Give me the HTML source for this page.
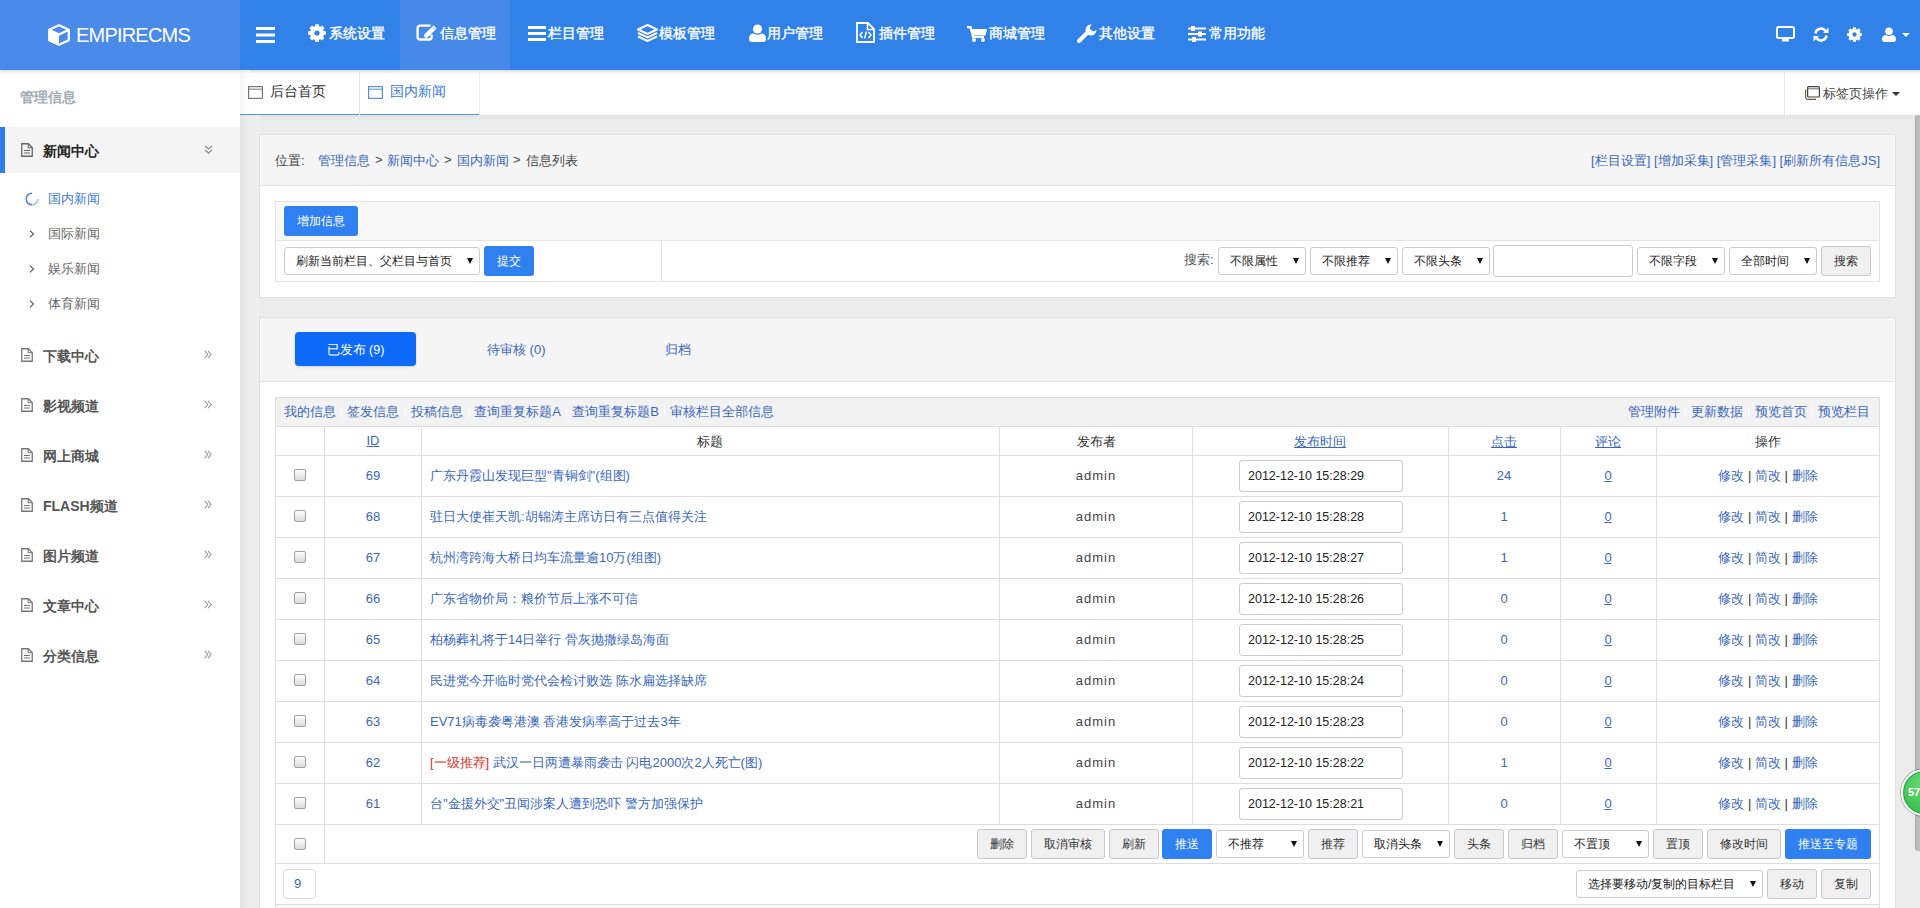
<!DOCTYPE html>
<html><head><meta charset="utf-8">
<style>
*{box-sizing:border-box;margin:0;padding:0}
html,body{width:1920px;height:908px;overflow:hidden;background:#fff;font-family:"Liberation Sans",sans-serif;font-size:13px;color:#333}
.abs{position:absolute}
#hdr{position:absolute;left:0;top:0;width:1920px;height:70px;background:#3081e8;z-index:5;box-shadow:0 1px 3px rgba(0,0,0,.12)}
#logo{position:absolute;left:0;top:0;width:240px;height:70px;background:#4a8ae8;color:#fff}
#logo .t{position:absolute;left:76px;top:24px;font-size:20px;letter-spacing:-0.8px}
.navt{color:#fff;font-size:14px;white-space:nowrap;-webkit-text-stroke:0.35px #fff}
.nav{position:absolute;top:0;height:70px;width:110px;color:#fff;font-size:13px}
.nav.on{background:#4689e8}
.nav svg{position:absolute;top:24px}
.nav span{position:absolute;top:25px}
#side{position:absolute;left:0;top:70px;width:240px;height:838px;background:#fff}
#tabs{position:absolute;left:240px;top:70px;width:1680px;height:45px;background:#fff}
#main{position:absolute;left:240px;top:115px;width:1680px;height:793px;background:#ededed}
.panel{position:absolute;left:20px;width:1635px;background:#fff;border:1px solid #e3e3e3}
a{color:#2c67c4;text-decoration:none}
.btn{position:absolute;height:30px;border:1px solid #ccc;border-radius:3px;background:#f2f2f2;color:#333;text-align:center;line-height:28px;font-size:13px}
.btnb{position:absolute;height:30px;border-radius:3px;background:#2f80ed;color:#fff;text-align:center;line-height:30px;font-size:13px}
.sel{position:absolute;height:28px;border:1px solid #ccc;border-radius:3px;background:#fff;color:#222;line-height:26px;font-size:12px;padding-left:11px;white-space:nowrap;overflow:hidden}
.sel:after{content:"";position:absolute;right:6px;top:10px;border-left:3px solid transparent;border-right:3px solid transparent;border-top:6px solid #111}
</style></head><body>

<div id="hdr">
  <div id="logo">
    <svg class="abs" style="left:48px;top:24px" width="22" height="22" viewBox="0 0 22 22"><path d="M11 1.2 L20.8 5.8 L20.8 16.2 L11 20.8 L1.2 16.2 L1.2 5.8 Z" fill="none" stroke="#fff" stroke-width="2.2" stroke-linejoin="round"/><path d="M1.5 5.9 L11 10.5 L20.5 5.9" fill="none" stroke="#fff" stroke-width="2.2"/><path d="M1.2 5.8 L11 10.5 L11 20.8 L1.2 16.2 Z" fill="#fff"/></svg>
    <div class="t">EMPIRECMS</div>
  </div>
  <svg class="abs" style="left:256px;top:27px" width="19" height="16" viewBox="0 0 19 16"><rect x="0" y="0" width="19" height="3" fill="#fff"/><rect x="0" y="6.5" width="19" height="3" fill="#fff"/><rect x="0" y="13" width="19" height="3" fill="#fff"/></svg>
  <div class="abs" style="left:308px;top:24px;width:18px;height:18px;line-height:0"><svg width="18" height="18" viewBox="0 0 18 18"><path fill-rule="evenodd" fill="#fff" d="M7.05 2.28 L7.24 0.17 L10.76 0.17 L10.95 2.28 L12.37 2.87 L14.00 1.52 L16.48 4.00 L15.13 5.63 L15.72 7.05 L17.83 7.24 L17.83 10.76 L15.72 10.95 L15.13 12.37 L16.48 14.00 L14.00 16.48 L12.37 15.13 L10.95 15.72 L10.76 17.83 L7.24 17.83 L7.05 15.72 L5.63 15.13 L4.00 16.48 L1.52 14.00 L2.87 12.37 L2.28 10.95 L0.17 10.76 L0.17 7.24 L2.28 7.05 L2.87 5.63 L1.52 4.00 L4.00 1.52 L5.63 2.87Z M11.60 9 A2.6 2.6 0 1 0 6.40 9 A2.6 2.6 0 1 0 11.60 9Z"/></svg></div>
  <div class="abs navt" style="left:329px;top:25px">系统设置</div>
  <div class="abs" style="left:400px;top:0;width:110px;height:70px;background:#4689e8"></div>
  <div class="abs" style="left:416px;top:24px;width:22px;height:17px;line-height:0"><svg width="22" height="17" viewBox="0 0 22 17"><path d="M14.5 1.6 H4.2 Q1.6 1.6 1.6 4.2 V12.9 Q1.6 15.5 4.2 15.5 H13 Q15.6 15.5 15.6 12.9 V10.5" fill="none" stroke="#fff" stroke-width="2.3"/><path d="M8.2 10.6 L17.5 1.3 L20.6 4.4 L11.3 13.7 L8 14 Z" fill="#fff"/><path d="M16.2 2.6 L19.3 5.7" stroke="#4689e8" stroke-width="0.7"/><path d="M8 14 L9.5 14 L8 12.5Z" fill="#4689e8"/></svg></div>
  <div class="abs navt" style="left:440px;top:25px">信息管理</div>
  <div class="abs" style="left:528px;top:26px;width:18px;height:15px;line-height:0"><svg width="18" height="15" viewBox="0 0 18 15"><rect y="0" width="18" height="3" fill="#fff"/><rect y="6" width="18" height="3" fill="#fff"/><rect y="12" width="18" height="3" fill="#fff"/></svg></div>
  <div class="abs navt" style="left:548px;top:25px">栏目管理</div>
  <div class="abs" style="left:637px;top:24px;width:21px;height:18px;line-height:0"><svg width="21" height="18" viewBox="0 0 21 18"><path d="M10.5 1 L20 5.5 L10.5 10 L1 5.5 Z" fill="none" stroke="#fff" stroke-width="2"/><path d="M1 9 L10.5 13.5 L20 9" fill="none" stroke="#fff" stroke-width="2"/><path d="M1 12.5 L10.5 17 L20 12.5" fill="none" stroke="#fff" stroke-width="2"/></svg></div>
  <div class="abs navt" style="left:659px;top:25px">模板管理</div>
  <div class="abs" style="left:749px;top:24px;width:17px;height:18px;line-height:0"><svg width="17" height="18" viewBox="0 0 17 18"><circle cx="8.5" cy="5" r="4.6" fill="#fff"/><path d="M0 15 Q0 9.5 4.5 9.5 Q8.5 12 12.5 9.5 Q17 9.5 17 15 Q17 18 14.5 18 H2.5 Q0 18 0 15Z" fill="#fff"/></svg></div>
  <div class="abs navt" style="left:767px;top:25px">用户管理</div>
  <div class="abs" style="left:856px;top:22px;width:19px;height:21px;line-height:0"><svg width="19" height="21" viewBox="0 0 19 21"><path d="M1 1 H12 L18 7 V20 H1 Z" fill="none" stroke="#fff" stroke-width="1.8"/><path d="M11.5 1 V7.5 H18" fill="none" stroke="#fff" stroke-width="1.5"/><path d="M6.5 10 L4 13 L6.5 16 M12.5 10 L15 13 L12.5 16 M10.5 9.5 L8.5 16.5" fill="none" stroke="#fff" stroke-width="1.5"/></svg></div>
  <div class="abs navt" style="left:879px;top:25px">插件管理</div>
  <div class="abs" style="left:967px;top:26px;width:20px;height:16px;line-height:0"><svg width="20" height="16" viewBox="0 0 20 16"><path d="M0 1.2 H3.5 L6 11 H17" fill="none" stroke="#fff" stroke-width="2.2"/><path d="M4.2 3 H20 L18.5 9.5 H5.8 Z" fill="#fff"/><circle cx="7" cy="14" r="2" fill="#fff"/><circle cx="16" cy="14" r="2" fill="#fff"/></svg></div>
  <div class="abs navt" style="left:989px;top:25px">商城管理</div>
  <div class="abs" style="left:1077px;top:24px;width:20px;height:19px;line-height:0"><svg width="20" height="19" viewBox="0 0 20 19"><path d="M2 17 L11 8" stroke="#fff" stroke-width="4" stroke-linecap="round"/><path d="M14.5 0.5 A5.5 5.5 0 1 0 19.5 6 L16 7.5 L12.5 4.5 L14.5 0.5Z" fill="#fff"/></svg></div>
  <div class="abs navt" style="left:1099px;top:25px">其他设置</div>
  <div class="abs" style="left:1188px;top:26px;width:18px;height:16px;line-height:0"><svg width="18" height="16" viewBox="0 0 18 16"><rect y="1.5" width="18" height="2" fill="#fff"/><rect y="7" width="18" height="2" fill="#fff"/><rect y="12.5" width="18" height="2" fill="#fff"/><rect x="3" y="0" width="4" height="5" fill="#fff"/><rect x="10" y="5.5" width="4" height="5" fill="#fff"/><rect x="4" y="11" width="4" height="5" fill="#fff"/></svg></div>
  <div class="abs navt" style="left:1209px;top:25px">常用功能</div>
  <div class="abs" style="left:1776px;top:26px;line-height:0"><svg width="19" height="16" viewBox="0 0 19 16"><rect x="1" y="1" width="17" height="11" rx="1.5" fill="none" stroke="#fff" stroke-width="2"/><rect x="6" y="12" width="7" height="3.5" fill="#fff"/></svg></div>
  <div class="abs" style="left:1813px;top:27px;line-height:0"><svg width="16" height="15" viewBox="0 0 16 15"><path d="M2.5 6.5 A5.5 5.5 0 0 1 12.5 4" fill="none" stroke="#fff" stroke-width="2.4"/><path d="M15.5 0.5 V6 H10 Z" fill="#fff"/><path d="M13.5 8.5 A5.5 5.5 0 0 1 3.5 11" fill="none" stroke="#fff" stroke-width="2.4"/><path d="M0.5 14.5 V9 H6 Z" fill="#fff"/></svg></div>
  <div class="abs" style="left:1847px;top:27px;line-height:0"><svg width="15" height="15" viewBox="0 0 18 18"><path fill-rule="evenodd" fill="#fff" d="M7.05 2.28 L7.24 0.17 L10.76 0.17 L10.95 2.28 L12.37 2.87 L14.00 1.52 L16.48 4.00 L15.13 5.63 L15.72 7.05 L17.83 7.24 L17.83 10.76 L15.72 10.95 L15.13 12.37 L16.48 14.00 L14.00 16.48 L12.37 15.13 L10.95 15.72 L10.76 17.83 L7.24 17.83 L7.05 15.72 L5.63 15.13 L4.00 16.48 L1.52 14.00 L2.87 12.37 L2.28 10.95 L0.17 10.76 L0.17 7.24 L2.28 7.05 L2.87 5.63 L1.52 4.00 L4.00 1.52 L5.63 2.87Z M11.60 9 A2.6 2.6 0 1 0 6.40 9 A2.6 2.6 0 1 0 11.60 9Z"/></svg></div>
  <div class="abs" style="left:1882px;top:27px;line-height:0"><svg width="14" height="15" viewBox="0 0 17 18"><circle cx="8.5" cy="5" r="4.6" fill="#fff"/><path d="M0 15 Q0 9.5 4.5 9.5 Q8.5 12 12.5 9.5 Q17 9.5 17 15 Q17 18 14.5 18 H2.5 Q0 18 0 15Z" fill="#fff"/></svg></div>
  <div class="abs" style="left:1902px;top:33px;width:0;height:0;border-left:4px solid transparent;border-right:4px solid transparent;border-top:4.5px solid #fff"></div>
</div>

<div id="side"><div class="abs" style="left:0;top:0;width:240px;height:5px;background:linear-gradient(#f3f3f3,#fff)"></div><div class="abs" style="left:20px;top:19px;font-size:14px;font-weight:bold;color:#a3abb3">管理信息</div>
<div class="abs" style="left:0;top:57px;width:240px;height:46px;background:#f4f4f4"></div>
<div class="abs" style="left:0;top:57px;width:5px;height:46px;background:#2f7de6"></div>
<div class="abs" style="left:21px;top:73px;line-height:0"><svg width="12" height="14" viewBox="0 0 12 14"><path d="M0.75 0.75 H7.5 L11.25 4.5 V13.25 H0.75 Z" fill="none" stroke="#666" stroke-width="1.3"/><path d="M7.2 0.9 V4.8 H11.1" fill="none" stroke="#666" stroke-width="1.1"/><path d="M3 7.5 H9 M3 10 H9" stroke="#666" stroke-width="1.1"/></svg></div>
<div class="abs" style="left:43px;top:73px;font-size:14px;font-weight:bold;color:#222">新闻中心</div>
<div class="abs" style="left:204px;top:75px;line-height:0"><svg width="9" height="9" viewBox="0 0 9 9"><path d="M1 1 L4.5 4 L8 1 M1 5 L4.5 8 L8 5" fill="none" stroke="#888" stroke-width="1.1"/></svg></div>
<div class="abs" style="left:25px;top:122px;line-height:0"><svg width="14" height="14" viewBox="0 0 14 14"><path d="M7 1.2 A5.8 5.8 0 0 0 1.2 7 A5.8 5.8 0 0 0 7 12.8" fill="none" stroke="#4f86d6" stroke-width="1.6"/><path d="M7 12.8 A5.8 5.8 0 0 0 12.8 7" fill="none" stroke="#a9c5ee" stroke-width="1.6"/></svg></div>
<div class="abs" style="left:48px;top:120px;font-size:13px;color:#3b7bd4">国内新闻</div>
<div class="abs" style="left:29px;top:160px;line-height:0"><svg width="6" height="8" viewBox="0 0 6 8"><path d="M1 0.8 L4.5 4 L1 7.2" fill="none" stroke="#666" stroke-width="1.2"/></svg></div>
<div class="abs" style="left:48px;top:155px;font-size:13px;color:#666">国际新闻</div>
<div class="abs" style="left:29px;top:195px;line-height:0"><svg width="6" height="8" viewBox="0 0 6 8"><path d="M1 0.8 L4.5 4 L1 7.2" fill="none" stroke="#666" stroke-width="1.2"/></svg></div>
<div class="abs" style="left:48px;top:190px;font-size:13px;color:#666">娱乐新闻</div>
<div class="abs" style="left:29px;top:230px;line-height:0"><svg width="6" height="8" viewBox="0 0 6 8"><path d="M1 0.8 L4.5 4 L1 7.2" fill="none" stroke="#666" stroke-width="1.2"/></svg></div>
<div class="abs" style="left:48px;top:225px;font-size:13px;color:#666">体育新闻</div>
<div class="abs" style="left:21px;top:278px;line-height:0"><svg width="12" height="14" viewBox="0 0 12 14"><path d="M0.75 0.75 H7.5 L11.25 4.5 V13.25 H0.75 Z" fill="none" stroke="#777" stroke-width="1.3"/><path d="M7.2 0.9 V4.8 H11.1" fill="none" stroke="#777" stroke-width="1.1"/><path d="M3 7.5 H9 M3 10 H9" stroke="#777" stroke-width="1.1"/></svg></div>
<div class="abs" style="left:43px;top:278px;font-size:14px;font-weight:bold;color:#555">下载中心</div>
<div class="abs" style="left:204px;top:280px;line-height:0"><svg width="8" height="9" viewBox="0 0 8 9"><path d="M0.8 0.8 L3.8 4.5 L0.8 8.2 M4 0.8 L7 4.5 L4 8.2" fill="none" stroke="#999" stroke-width="1.1"/></svg></div>
<div class="abs" style="left:21px;top:328px;line-height:0"><svg width="12" height="14" viewBox="0 0 12 14"><path d="M0.75 0.75 H7.5 L11.25 4.5 V13.25 H0.75 Z" fill="none" stroke="#777" stroke-width="1.3"/><path d="M7.2 0.9 V4.8 H11.1" fill="none" stroke="#777" stroke-width="1.1"/><path d="M3 7.5 H9 M3 10 H9" stroke="#777" stroke-width="1.1"/></svg></div>
<div class="abs" style="left:43px;top:328px;font-size:14px;font-weight:bold;color:#555">影视频道</div>
<div class="abs" style="left:204px;top:330px;line-height:0"><svg width="8" height="9" viewBox="0 0 8 9"><path d="M0.8 0.8 L3.8 4.5 L0.8 8.2 M4 0.8 L7 4.5 L4 8.2" fill="none" stroke="#999" stroke-width="1.1"/></svg></div>
<div class="abs" style="left:21px;top:378px;line-height:0"><svg width="12" height="14" viewBox="0 0 12 14"><path d="M0.75 0.75 H7.5 L11.25 4.5 V13.25 H0.75 Z" fill="none" stroke="#777" stroke-width="1.3"/><path d="M7.2 0.9 V4.8 H11.1" fill="none" stroke="#777" stroke-width="1.1"/><path d="M3 7.5 H9 M3 10 H9" stroke="#777" stroke-width="1.1"/></svg></div>
<div class="abs" style="left:43px;top:378px;font-size:14px;font-weight:bold;color:#555">网上商城</div>
<div class="abs" style="left:204px;top:380px;line-height:0"><svg width="8" height="9" viewBox="0 0 8 9"><path d="M0.8 0.8 L3.8 4.5 L0.8 8.2 M4 0.8 L7 4.5 L4 8.2" fill="none" stroke="#999" stroke-width="1.1"/></svg></div>
<div class="abs" style="left:21px;top:428px;line-height:0"><svg width="12" height="14" viewBox="0 0 12 14"><path d="M0.75 0.75 H7.5 L11.25 4.5 V13.25 H0.75 Z" fill="none" stroke="#777" stroke-width="1.3"/><path d="M7.2 0.9 V4.8 H11.1" fill="none" stroke="#777" stroke-width="1.1"/><path d="M3 7.5 H9 M3 10 H9" stroke="#777" stroke-width="1.1"/></svg></div>
<div class="abs" style="left:43px;top:428px;font-size:14px;font-weight:bold;color:#555">FLASH频道</div>
<div class="abs" style="left:204px;top:430px;line-height:0"><svg width="8" height="9" viewBox="0 0 8 9"><path d="M0.8 0.8 L3.8 4.5 L0.8 8.2 M4 0.8 L7 4.5 L4 8.2" fill="none" stroke="#999" stroke-width="1.1"/></svg></div>
<div class="abs" style="left:21px;top:478px;line-height:0"><svg width="12" height="14" viewBox="0 0 12 14"><path d="M0.75 0.75 H7.5 L11.25 4.5 V13.25 H0.75 Z" fill="none" stroke="#777" stroke-width="1.3"/><path d="M7.2 0.9 V4.8 H11.1" fill="none" stroke="#777" stroke-width="1.1"/><path d="M3 7.5 H9 M3 10 H9" stroke="#777" stroke-width="1.1"/></svg></div>
<div class="abs" style="left:43px;top:478px;font-size:14px;font-weight:bold;color:#555">图片频道</div>
<div class="abs" style="left:204px;top:480px;line-height:0"><svg width="8" height="9" viewBox="0 0 8 9"><path d="M0.8 0.8 L3.8 4.5 L0.8 8.2 M4 0.8 L7 4.5 L4 8.2" fill="none" stroke="#999" stroke-width="1.1"/></svg></div>
<div class="abs" style="left:21px;top:528px;line-height:0"><svg width="12" height="14" viewBox="0 0 12 14"><path d="M0.75 0.75 H7.5 L11.25 4.5 V13.25 H0.75 Z" fill="none" stroke="#777" stroke-width="1.3"/><path d="M7.2 0.9 V4.8 H11.1" fill="none" stroke="#777" stroke-width="1.1"/><path d="M3 7.5 H9 M3 10 H9" stroke="#777" stroke-width="1.1"/></svg></div>
<div class="abs" style="left:43px;top:528px;font-size:14px;font-weight:bold;color:#555">文章中心</div>
<div class="abs" style="left:204px;top:530px;line-height:0"><svg width="8" height="9" viewBox="0 0 8 9"><path d="M0.8 0.8 L3.8 4.5 L0.8 8.2 M4 0.8 L7 4.5 L4 8.2" fill="none" stroke="#999" stroke-width="1.1"/></svg></div>
<div class="abs" style="left:21px;top:578px;line-height:0"><svg width="12" height="14" viewBox="0 0 12 14"><path d="M0.75 0.75 H7.5 L11.25 4.5 V13.25 H0.75 Z" fill="none" stroke="#777" stroke-width="1.3"/><path d="M7.2 0.9 V4.8 H11.1" fill="none" stroke="#777" stroke-width="1.1"/><path d="M3 7.5 H9 M3 10 H9" stroke="#777" stroke-width="1.1"/></svg></div>
<div class="abs" style="left:43px;top:578px;font-size:14px;font-weight:bold;color:#555">分类信息</div>
<div class="abs" style="left:204px;top:580px;line-height:0"><svg width="8" height="9" viewBox="0 0 8 9"><path d="M0.8 0.8 L3.8 4.5 L0.8 8.2 M4 0.8 L7 4.5 L4 8.2" fill="none" stroke="#999" stroke-width="1.1"/></svg></div></div>
<div id="tabs"><div class="abs" style="left:0;top:0;width:1680px;height:5px;background:linear-gradient(#f0f0f0,#fff)"></div>
<div class="abs" style="left:0;top:0;width:10px;height:44px;background:linear-gradient(90deg,#f6f6f6,#fff)"></div>
<div class="abs" style="left:8px;top:16px;line-height:0"><svg width="15" height="13" viewBox="0 0 15 13"><rect x="0.6" y="0.6" width="13.8" height="11.8" fill="none" stroke="#777" stroke-width="1.2"/><path d="M0.6 3.2 H14.4" stroke="#777" stroke-width="1"/></svg></div>
<div class="abs" style="left:30px;top:13px;font-size:14px;color:#333">后台首页</div>
<div class="abs" style="left:119px;top:2px;width:1px;height:42px;background:#e6e6e6"></div>
<div class="abs" style="left:128px;top:16px;line-height:0"><svg width="15" height="13" viewBox="0 0 15 13"><rect x="0.6" y="0.6" width="13.8" height="11.8" fill="none" stroke="#5b8fd8" stroke-width="1.2"/><path d="M0.6 3.2 H14.4" stroke="#5b8fd8" stroke-width="1"/></svg></div>
<div class="abs" style="left:150px;top:13px;font-size:14px;color:#3b7bd4">国内新闻</div>
<div class="abs" style="left:0;top:44px;width:119px;height:1px;background:#5b8fd8"></div>
<div class="abs" style="left:120px;top:44px;width:119px;height:1px;background:#5b8fd8"></div>
<div class="abs" style="left:1544px;top:2px;width:1px;height:43px;background:#e8e8e8"></div>
<div class="abs" style="left:239px;top:2px;width:1px;height:42px;background:#ececec"></div>
<div class="abs" style="left:1565px;top:16px;line-height:0"><svg width="15" height="14" viewBox="0 0 15 14"><rect x="2.6" y="0.6" width="11.8" height="10.4" rx="1" fill="none" stroke="#444" stroke-width="1.2"/><path d="M2.6 2.8 H14.4" stroke="#666" stroke-width="1"/><path d="M0.6 3.5 V11.5 Q0.6 13.4 2.5 13.4 H11" fill="none" stroke="#6b5a40" stroke-width="1.1"/></svg></div>
<div class="abs" style="left:1583px;top:15px;font-size:13px;color:#444">标签页操作</div>
<div class="abs" style="left:1652px;top:22px;width:0;height:0;border-left:4px solid transparent;border-right:4px solid transparent;border-top:4px solid #333"></div></div>
<div id="main">
<div class="abs" style="left:0px;top:0px;width:1680px;height:793px;background:#ececec"></div>
<div class="abs" style="left:0px;top:0px;width:1680px;height:6px;background:linear-gradient(#e3e3e3,#ececec)"></div>
<div class="abs" style="left:0px;top:0px;width:20px;height:793px;background:linear-gradient(90deg,#e4e4e4,#ececec 45%,#efefef)"></div>
<div class="abs" style="left:19px;top:19px;width:1637px;height:164px;background:#fff;border:1px solid #e0e0e0"></div>
<div class="abs" style="left:20px;top:20px;width:1635px;height:51px;background:#f5f5f5;border-bottom:1px solid #e2e2e2"></div>
<div class="abs" style="left:35px;top:37px;font-size:13px;color:#444">位置:</div>
<div class="abs" style="left:78px;top:37px;font-size:13px;color:#3a68b9">管理信息</div>
<div class="abs" style="left:135px;top:37px;font-size:13px;color:#444">&gt;</div>
<div class="abs" style="left:147px;top:37px;font-size:13px;color:#3a68b9">新闻中心</div>
<div class="abs" style="left:204px;top:37px;font-size:13px;color:#444">&gt;</div>
<div class="abs" style="left:217px;top:37px;font-size:13px;color:#3a68b9">国内新闻</div>
<div class="abs" style="left:273px;top:37px;font-size:13px;color:#444">&gt;</div>
<div class="abs" style="left:286px;top:37px;font-size:13px;color:#444">信息列表</div>
<div class="abs" style="left:1347px;top:37px;font-size:13px;color:#3a68b9;white-space:nowrap;width:293px;text-align:right">[栏目设置] [增加采集] [管理采集] [刷新所有信息JS]</div>
<div class="abs" style="left:35px;top:86px;width:1605px;height:81px;border:1px solid #e3e3e3;background:#fff"></div>
<div class="abs" style="left:36px;top:87px;width:1603px;height:39px;background:#f8f8f8;border-bottom:1px solid #e3e3e3"></div>
<div class="abs" style="left:421px;top:126px;width:1px;height:40px;background:#e3e3e3"></div>
<div class="abs" style="left:44px;top:91px;width:74px;height:30px;background:#2f80f0;border-radius:3px;color:#fff;font-size:12px;text-align:center;line-height:30px">增加信息</div>
<div class="abs" style="left:44px;top:132px;width:196px;height:28px;"><div class="sel" style="left:0;top:0;width:196px;padding-left:11px">刷新当前栏目、父栏目与首页</div></div>
<div class="abs" style="left:244px;top:131px;width:50px;height:30px;background:#2f80f0;border-radius:3px;color:#fff;font-size:12px;text-align:center;line-height:30px">提交</div>
<div class="abs" style="left:944px;top:136px;font-size:13px;color:#555">搜索:</div>
<div class="abs" style="left:978px;top:132px;width:88px;height:28px"><div class="sel" style="left:0;top:0;width:88px">不限属性</div></div>
<div class="abs" style="left:1070px;top:132px;width:88px;height:28px"><div class="sel" style="left:0;top:0;width:88px">不限推荐</div></div>
<div class="abs" style="left:1162px;top:132px;width:88px;height:28px"><div class="sel" style="left:0;top:0;width:88px">不限头条</div></div>
<div class="abs" style="left:1397px;top:132px;width:88px;height:28px"><div class="sel" style="left:0;top:0;width:88px">不限字段</div></div>
<div class="abs" style="left:1489px;top:132px;width:88px;height:28px"><div class="sel" style="left:0;top:0;width:88px">全部时间</div></div>
<div class="abs" style="left:1253px;top:130px;width:140px;height:32px;border:1px solid #ccc;border-radius:3px;background:#fff"></div>
<div class="abs" style="left:1581px;top:131px;width:50px;height:30px;border:1px solid #c8c8c8;border-radius:3px;background:#f0f0f0;color:#333;font-size:12px;text-align:center;line-height:28px">搜索</div>
<div class="abs" style="left:19px;top:202px;width:1637px;height:603px;background:#fff;border:1px solid #e0e0e0"></div>
<div class="abs" style="left:20px;top:203px;width:1635px;height:64px;background:#f5f5f5;border-bottom:1px solid #e2e2e2"></div>
<div class="abs" style="left:55px;top:217px;width:121px;height:34px;background:#0d6af8;border-radius:4px;color:#fff;font-size:12.5px;text-align:center;line-height:36px;box-shadow:0 1px 2px rgba(0,0,0,.15)">已发布 (9)</div>
<div class="abs" style="left:247px;top:226px;font-size:13px;color:#3a68b9">待审核 (0)</div>
<div class="abs" style="left:425px;top:226px;font-size:13px;color:#3a68b9">归档</div>
<div class="abs" style="left:35px;top:282px;width:1605px;height:508px;border:1px solid #ddd;background:#fff"></div>
<div class="abs" style="left:36px;top:283px;width:1603px;height:29px;background:#f2f2f2;border-bottom:1px solid #ddd"></div>
<div class="abs" style="left:44px;top:288px;font-size:13px;color:#3a68b9;white-space:nowrap">我的信息<span style="color:#fbfbfb;margin:0 4px">|</span>签发信息<span style="color:#fbfbfb;margin:0 4px">|</span>投稿信息<span style="color:#fbfbfb;margin:0 4px">|</span>查询重复标题A<span style="color:#fbfbfb;margin:0 4px">|</span>查询重复标题B<span style="color:#fbfbfb;margin:0 4px">|</span>审核栏目全部信息</div>
<div class="abs" style="left:1260px;top:288px;font-size:13px;color:#3a68b9;white-space:nowrap;width:370px;text-align:right">管理附件<span style="color:#fbfbfb;margin:0 4px">|</span>更新数据<span style="color:#fbfbfb;margin:0 4px">|</span>预览首页<span style="color:#fbfbfb;margin:0 4px">|</span>预览栏目</div>
<div class="abs" style="left:36px;top:340px;width:1603px;height:1px;background:#ddd"></div>
<div class="abs" style="left:36px;top:381px;width:1603px;height:1px;background:#ddd"></div>
<div class="abs" style="left:36px;top:422px;width:1603px;height:1px;background:#ddd"></div>
<div class="abs" style="left:36px;top:463px;width:1603px;height:1px;background:#ddd"></div>
<div class="abs" style="left:36px;top:504px;width:1603px;height:1px;background:#ddd"></div>
<div class="abs" style="left:36px;top:545px;width:1603px;height:1px;background:#ddd"></div>
<div class="abs" style="left:36px;top:586px;width:1603px;height:1px;background:#ddd"></div>
<div class="abs" style="left:36px;top:627px;width:1603px;height:1px;background:#ddd"></div>
<div class="abs" style="left:36px;top:668px;width:1603px;height:1px;background:#ddd"></div>
<div class="abs" style="left:36px;top:709px;width:1603px;height:1px;background:#ddd"></div>
<div class="abs" style="left:36px;top:748px;width:1603px;height:1px;background:#ddd"></div>
<div class="abs" style="left:84px;top:311px;width:1px;height:398px;background:#ddd"></div>
<div class="abs" style="left:181px;top:311px;width:1px;height:398px;background:#ddd"></div>
<div class="abs" style="left:759px;top:311px;width:1px;height:398px;background:#ddd"></div>
<div class="abs" style="left:952px;top:311px;width:1px;height:398px;background:#ddd"></div>
<div class="abs" style="left:1208px;top:311px;width:1px;height:398px;background:#ddd"></div>
<div class="abs" style="left:1320px;top:311px;width:1px;height:398px;background:#ddd"></div>
<div class="abs" style="left:1416px;top:311px;width:1px;height:398px;background:#ddd"></div>
<div class="abs" style="left:84px;top:709px;width:1px;height:39px;background:#ddd"></div>
<div class="abs" style="left:33px;top:318px;width:200px;text-align:center;font-size:13px;color:#3a68b9"><u>ID</u></div>
<div class="abs" style="left:370px;top:318px;width:200px;text-align:center;font-size:13px;color:#333">标题</div>
<div class="abs" style="left:756px;top:318px;width:200px;text-align:center;font-size:13px;color:#333">发布者</div>
<div class="abs" style="left:980px;top:318px;width:200px;text-align:center;font-size:13px;color:#3a68b9"><u>发布时间</u></div>
<div class="abs" style="left:1164px;top:318px;width:200px;text-align:center;font-size:13px;color:#3a68b9"><u>点击</u></div>
<div class="abs" style="left:1268px;top:318px;width:200px;text-align:center;font-size:13px;color:#3a68b9"><u>评论</u></div>
<div class="abs" style="left:1428px;top:318px;width:200px;text-align:center;font-size:13px;color:#333">操作</div>
<div class="abs" style="left:54px;top:354px;width:12px;height:12px"><div style="width:12px;height:12px;border:1px solid #a0a0a0;border-radius:2px;background:linear-gradient(#fcfcfc,#dcdcdc)"></div></div>
<div class="abs" style="left:33px;top:353px;width:200px;text-align:center;font-size:13px;color:#3a68b9">69</div>
<div class="abs" style="left:190px;top:352px;font-size:13px;color:#3a68b9;white-space:nowrap">广东丹霞山发现巨型"青铜剑"(组图)</div>
<div class="abs" style="left:756px;top:353px;width:200px;text-align:center;font-size:13px;color:#444;letter-spacing:1px">admin</div>
<div class="abs" style="left:999px;top:345px;width:164px;height:32px;border:1px solid #ccc;border-radius:3px;background:#fff"></div>
<div class="abs" style="left:1008px;top:354px;font-size:12.5px;color:#222;white-space:nowrap">2012-12-10 15:28:29</div>
<div class="abs" style="left:1164px;top:353px;width:200px;text-align:center;font-size:13px;color:#3a68b9">24</div>
<div class="abs" style="left:1268px;top:353px;width:200px;text-align:center;font-size:13px;color:#3a68b9"><u>0</u></div>
<div class="abs" style="left:1428px;top:352px;width:200px;text-align:center;font-size:13px;color:#3a68b9;white-space:nowrap">修改 <span style="color:#333">|</span> 简改 <span style="color:#333">|</span> 删除</div>
<div class="abs" style="left:54px;top:395px;width:12px;height:12px"><div style="width:12px;height:12px;border:1px solid #a0a0a0;border-radius:2px;background:linear-gradient(#fcfcfc,#dcdcdc)"></div></div>
<div class="abs" style="left:33px;top:394px;width:200px;text-align:center;font-size:13px;color:#3a68b9">68</div>
<div class="abs" style="left:190px;top:393px;font-size:13px;color:#3a68b9;white-space:nowrap">驻日大使崔天凯:胡锦涛主席访日有三点值得关注</div>
<div class="abs" style="left:756px;top:394px;width:200px;text-align:center;font-size:13px;color:#444;letter-spacing:1px">admin</div>
<div class="abs" style="left:999px;top:386px;width:164px;height:32px;border:1px solid #ccc;border-radius:3px;background:#fff"></div>
<div class="abs" style="left:1008px;top:395px;font-size:12.5px;color:#222;white-space:nowrap">2012-12-10 15:28:28</div>
<div class="abs" style="left:1164px;top:394px;width:200px;text-align:center;font-size:13px;color:#3a68b9">1</div>
<div class="abs" style="left:1268px;top:394px;width:200px;text-align:center;font-size:13px;color:#3a68b9"><u>0</u></div>
<div class="abs" style="left:1428px;top:393px;width:200px;text-align:center;font-size:13px;color:#3a68b9;white-space:nowrap">修改 <span style="color:#333">|</span> 简改 <span style="color:#333">|</span> 删除</div>
<div class="abs" style="left:54px;top:436px;width:12px;height:12px"><div style="width:12px;height:12px;border:1px solid #a0a0a0;border-radius:2px;background:linear-gradient(#fcfcfc,#dcdcdc)"></div></div>
<div class="abs" style="left:33px;top:435px;width:200px;text-align:center;font-size:13px;color:#3a68b9">67</div>
<div class="abs" style="left:190px;top:434px;font-size:13px;color:#3a68b9;white-space:nowrap">杭州湾跨海大桥日均车流量逾10万(组图)</div>
<div class="abs" style="left:756px;top:435px;width:200px;text-align:center;font-size:13px;color:#444;letter-spacing:1px">admin</div>
<div class="abs" style="left:999px;top:427px;width:164px;height:32px;border:1px solid #ccc;border-radius:3px;background:#fff"></div>
<div class="abs" style="left:1008px;top:436px;font-size:12.5px;color:#222;white-space:nowrap">2012-12-10 15:28:27</div>
<div class="abs" style="left:1164px;top:435px;width:200px;text-align:center;font-size:13px;color:#3a68b9">1</div>
<div class="abs" style="left:1268px;top:435px;width:200px;text-align:center;font-size:13px;color:#3a68b9"><u>0</u></div>
<div class="abs" style="left:1428px;top:434px;width:200px;text-align:center;font-size:13px;color:#3a68b9;white-space:nowrap">修改 <span style="color:#333">|</span> 简改 <span style="color:#333">|</span> 删除</div>
<div class="abs" style="left:54px;top:477px;width:12px;height:12px"><div style="width:12px;height:12px;border:1px solid #a0a0a0;border-radius:2px;background:linear-gradient(#fcfcfc,#dcdcdc)"></div></div>
<div class="abs" style="left:33px;top:476px;width:200px;text-align:center;font-size:13px;color:#3a68b9">66</div>
<div class="abs" style="left:190px;top:475px;font-size:13px;color:#3a68b9;white-space:nowrap">广东省物价局：粮价节后上涨不可信</div>
<div class="abs" style="left:756px;top:476px;width:200px;text-align:center;font-size:13px;color:#444;letter-spacing:1px">admin</div>
<div class="abs" style="left:999px;top:468px;width:164px;height:32px;border:1px solid #ccc;border-radius:3px;background:#fff"></div>
<div class="abs" style="left:1008px;top:477px;font-size:12.5px;color:#222;white-space:nowrap">2012-12-10 15:28:26</div>
<div class="abs" style="left:1164px;top:476px;width:200px;text-align:center;font-size:13px;color:#3a68b9">0</div>
<div class="abs" style="left:1268px;top:476px;width:200px;text-align:center;font-size:13px;color:#3a68b9"><u>0</u></div>
<div class="abs" style="left:1428px;top:475px;width:200px;text-align:center;font-size:13px;color:#3a68b9;white-space:nowrap">修改 <span style="color:#333">|</span> 简改 <span style="color:#333">|</span> 删除</div>
<div class="abs" style="left:54px;top:518px;width:12px;height:12px"><div style="width:12px;height:12px;border:1px solid #a0a0a0;border-radius:2px;background:linear-gradient(#fcfcfc,#dcdcdc)"></div></div>
<div class="abs" style="left:33px;top:517px;width:200px;text-align:center;font-size:13px;color:#3a68b9">65</div>
<div class="abs" style="left:190px;top:516px;font-size:13px;color:#3a68b9;white-space:nowrap">柏杨葬礼将于14日举行 骨灰抛撒绿岛海面</div>
<div class="abs" style="left:756px;top:517px;width:200px;text-align:center;font-size:13px;color:#444;letter-spacing:1px">admin</div>
<div class="abs" style="left:999px;top:509px;width:164px;height:32px;border:1px solid #ccc;border-radius:3px;background:#fff"></div>
<div class="abs" style="left:1008px;top:518px;font-size:12.5px;color:#222;white-space:nowrap">2012-12-10 15:28:25</div>
<div class="abs" style="left:1164px;top:517px;width:200px;text-align:center;font-size:13px;color:#3a68b9">0</div>
<div class="abs" style="left:1268px;top:517px;width:200px;text-align:center;font-size:13px;color:#3a68b9"><u>0</u></div>
<div class="abs" style="left:1428px;top:516px;width:200px;text-align:center;font-size:13px;color:#3a68b9;white-space:nowrap">修改 <span style="color:#333">|</span> 简改 <span style="color:#333">|</span> 删除</div>
<div class="abs" style="left:54px;top:559px;width:12px;height:12px"><div style="width:12px;height:12px;border:1px solid #a0a0a0;border-radius:2px;background:linear-gradient(#fcfcfc,#dcdcdc)"></div></div>
<div class="abs" style="left:33px;top:558px;width:200px;text-align:center;font-size:13px;color:#3a68b9">64</div>
<div class="abs" style="left:190px;top:557px;font-size:13px;color:#3a68b9;white-space:nowrap">民进党今开临时党代会检讨败选 陈水扁选择缺席</div>
<div class="abs" style="left:756px;top:558px;width:200px;text-align:center;font-size:13px;color:#444;letter-spacing:1px">admin</div>
<div class="abs" style="left:999px;top:550px;width:164px;height:32px;border:1px solid #ccc;border-radius:3px;background:#fff"></div>
<div class="abs" style="left:1008px;top:559px;font-size:12.5px;color:#222;white-space:nowrap">2012-12-10 15:28:24</div>
<div class="abs" style="left:1164px;top:558px;width:200px;text-align:center;font-size:13px;color:#3a68b9">0</div>
<div class="abs" style="left:1268px;top:558px;width:200px;text-align:center;font-size:13px;color:#3a68b9"><u>0</u></div>
<div class="abs" style="left:1428px;top:557px;width:200px;text-align:center;font-size:13px;color:#3a68b9;white-space:nowrap">修改 <span style="color:#333">|</span> 简改 <span style="color:#333">|</span> 删除</div>
<div class="abs" style="left:54px;top:600px;width:12px;height:12px"><div style="width:12px;height:12px;border:1px solid #a0a0a0;border-radius:2px;background:linear-gradient(#fcfcfc,#dcdcdc)"></div></div>
<div class="abs" style="left:33px;top:599px;width:200px;text-align:center;font-size:13px;color:#3a68b9">63</div>
<div class="abs" style="left:190px;top:598px;font-size:13px;color:#3a68b9;white-space:nowrap">EV71病毒袭粤港澳 香港发病率高于过去3年</div>
<div class="abs" style="left:756px;top:599px;width:200px;text-align:center;font-size:13px;color:#444;letter-spacing:1px">admin</div>
<div class="abs" style="left:999px;top:591px;width:164px;height:32px;border:1px solid #ccc;border-radius:3px;background:#fff"></div>
<div class="abs" style="left:1008px;top:600px;font-size:12.5px;color:#222;white-space:nowrap">2012-12-10 15:28:23</div>
<div class="abs" style="left:1164px;top:599px;width:200px;text-align:center;font-size:13px;color:#3a68b9">0</div>
<div class="abs" style="left:1268px;top:599px;width:200px;text-align:center;font-size:13px;color:#3a68b9"><u>0</u></div>
<div class="abs" style="left:1428px;top:598px;width:200px;text-align:center;font-size:13px;color:#3a68b9;white-space:nowrap">修改 <span style="color:#333">|</span> 简改 <span style="color:#333">|</span> 删除</div>
<div class="abs" style="left:54px;top:641px;width:12px;height:12px"><div style="width:12px;height:12px;border:1px solid #a0a0a0;border-radius:2px;background:linear-gradient(#fcfcfc,#dcdcdc)"></div></div>
<div class="abs" style="left:33px;top:640px;width:200px;text-align:center;font-size:13px;color:#3a68b9">62</div>
<div class="abs" style="left:190px;top:639px;font-size:13px;color:#3a68b9;white-space:nowrap"><span style="color:#d9342b">[一级推荐]</span> 武汉一日两遭暴雨袭击 闪电2000次2人死亡(图)</div>
<div class="abs" style="left:756px;top:640px;width:200px;text-align:center;font-size:13px;color:#444;letter-spacing:1px">admin</div>
<div class="abs" style="left:999px;top:632px;width:164px;height:32px;border:1px solid #ccc;border-radius:3px;background:#fff"></div>
<div class="abs" style="left:1008px;top:641px;font-size:12.5px;color:#222;white-space:nowrap">2012-12-10 15:28:22</div>
<div class="abs" style="left:1164px;top:640px;width:200px;text-align:center;font-size:13px;color:#3a68b9">1</div>
<div class="abs" style="left:1268px;top:640px;width:200px;text-align:center;font-size:13px;color:#3a68b9"><u>0</u></div>
<div class="abs" style="left:1428px;top:639px;width:200px;text-align:center;font-size:13px;color:#3a68b9;white-space:nowrap">修改 <span style="color:#333">|</span> 简改 <span style="color:#333">|</span> 删除</div>
<div class="abs" style="left:54px;top:682px;width:12px;height:12px"><div style="width:12px;height:12px;border:1px solid #a0a0a0;border-radius:2px;background:linear-gradient(#fcfcfc,#dcdcdc)"></div></div>
<div class="abs" style="left:33px;top:681px;width:200px;text-align:center;font-size:13px;color:#3a68b9">61</div>
<div class="abs" style="left:190px;top:680px;font-size:13px;color:#3a68b9;white-space:nowrap">台"金援外交"丑闻涉案人遭到恐吓 警方加强保护</div>
<div class="abs" style="left:756px;top:681px;width:200px;text-align:center;font-size:13px;color:#444;letter-spacing:1px">admin</div>
<div class="abs" style="left:999px;top:673px;width:164px;height:32px;border:1px solid #ccc;border-radius:3px;background:#fff"></div>
<div class="abs" style="left:1008px;top:682px;font-size:12.5px;color:#222;white-space:nowrap">2012-12-10 15:28:21</div>
<div class="abs" style="left:1164px;top:681px;width:200px;text-align:center;font-size:13px;color:#3a68b9">0</div>
<div class="abs" style="left:1268px;top:681px;width:200px;text-align:center;font-size:13px;color:#3a68b9"><u>0</u></div>
<div class="abs" style="left:1428px;top:680px;width:200px;text-align:center;font-size:13px;color:#3a68b9;white-space:nowrap">修改 <span style="color:#333">|</span> 简改 <span style="color:#333">|</span> 删除</div>
<div class="abs" style="left:54px;top:723px;width:12px;height:12px"><div style="width:12px;height:12px;border:1px solid #a0a0a0;border-radius:2px;background:linear-gradient(#fcfcfc,#dcdcdc)"></div></div>
<div class="abs" style="left:737px;top:714px;width:50px;border:1px solid #c8c8c8;border-radius:3px;background:#f0f0f0;color:#333;font-size:12px;text-align:center;line-height:28px;height:30px">删除</div>
<div class="abs" style="left:791px;top:714px;width:74px;border:1px solid #c8c8c8;border-radius:3px;background:#f0f0f0;color:#333;font-size:12px;text-align:center;line-height:28px;height:30px">取消审核</div>
<div class="abs" style="left:869px;top:714px;width:50px;border:1px solid #c8c8c8;border-radius:3px;background:#f0f0f0;color:#333;font-size:12px;text-align:center;line-height:28px;height:30px">刷新</div>
<div class="abs" style="left:922px;top:714px;width:50px;border-radius:3px;background:#2f80f0;color:#fff;font-size:12px;text-align:center;line-height:30px;height:30px">推送</div>
<div class="abs" style="left:976px;top:715px;width:88px;height:28px"><div class="sel" style="left:0;top:0;width:88px">不推荐</div></div>
<div class="abs" style="left:1068px;top:714px;width:50px;border:1px solid #c8c8c8;border-radius:3px;background:#f0f0f0;color:#333;font-size:12px;text-align:center;line-height:28px;height:30px">推荐</div>
<div class="abs" style="left:1122px;top:715px;width:88px;height:28px"><div class="sel" style="left:0;top:0;width:88px">取消头条</div></div>
<div class="abs" style="left:1214px;top:714px;width:50px;border:1px solid #c8c8c8;border-radius:3px;background:#f0f0f0;color:#333;font-size:12px;text-align:center;line-height:28px;height:30px">头条</div>
<div class="abs" style="left:1268px;top:714px;width:50px;border:1px solid #c8c8c8;border-radius:3px;background:#f0f0f0;color:#333;font-size:12px;text-align:center;line-height:28px;height:30px">归档</div>
<div class="abs" style="left:1322px;top:715px;width:87px;height:28px"><div class="sel" style="left:0;top:0;width:87px">不置顶</div></div>
<div class="abs" style="left:1413px;top:714px;width:50px;border:1px solid #c8c8c8;border-radius:3px;background:#f0f0f0;color:#333;font-size:12px;text-align:center;line-height:28px;height:30px">置顶</div>
<div class="abs" style="left:1467px;top:714px;width:74px;border:1px solid #c8c8c8;border-radius:3px;background:#f0f0f0;color:#333;font-size:12px;text-align:center;line-height:28px;height:30px">修改时间</div>
<div class="abs" style="left:1545px;top:714px;width:86px;border-radius:3px;background:#2f80f0;color:#fff;font-size:12px;text-align:center;line-height:30px;height:30px">推送至专题</div>
<div class="abs" style="left:43px;top:754px;width:33px;height:30px;border:1px solid #ddd;border-radius:4px;color:#3a68b9;font-size:13px;line-height:28px;padding-left:10px">9</div>
<div class="abs" style="left:1336px;top:755px;width:187px;height:28px"><div class="sel" style="left:0;top:0;width:187px">选择要移动/复制的目标栏目</div></div>
<div class="abs" style="left:1527px;top:754px;width:50px;border:1px solid #c8c8c8;border-radius:3px;background:#f0f0f0;color:#333;font-size:12px;text-align:center;line-height:28px;height:30px">移动</div>
<div class="abs" style="left:1581px;top:754px;width:50px;border:1px solid #c8c8c8;border-radius:3px;background:#f0f0f0;color:#333;font-size:12px;text-align:center;line-height:28px;height:30px">复制</div>
<div class="abs" style="left:35px;top:790px;width:1605px;height:5px;background:#f7f7f7;border-left:1px solid #ddd;border-right:1px solid #ddd"></div>
<div class="abs" style="left:1675px;top:0px;width:5px;height:736px;background:linear-gradient(90deg,#a9a9a9,#bdbdbd 45%);border-radius:3px 0 0 3px"></div>
<div class="abs" style="left:1661px;top:654px;width:47px;height:47px;border-radius:50%;background:radial-gradient(circle at 50% 30%,#6ada78,#3cc252 75%);border:2px solid #f4fbf5;box-shadow:0 0 0 1px rgba(0,0,0,.25),inset 0 0 0 1px #2a9a3e;color:#fff;font-weight:bold;font-size:11px;line-height:43px;padding-left:5px">57</div>
</div>

</body></html>
